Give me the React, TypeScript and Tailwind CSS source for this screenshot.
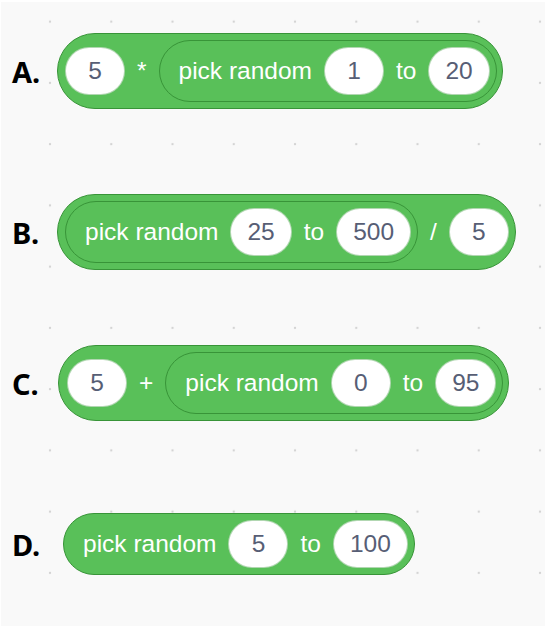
import React from "react"

const font = { fontFamily: '"Liberation Sans", Arial, sans-serif' }

function Input({ value }: { value: string }) {
	return (
		<div className="h-[48px] min-w-[60px] px-[16px] rounded-full bg-white border border-[#3f9c3f]/40 flex items-center justify-center text-[24.5px] text-[#575e75] leading-none shrink-0">
			{value}
		</div>
	)
}

function Word({ children }: { children: React.ReactNode }) {
	return <span className="text-[24.5px] text-white leading-none whitespace-nowrap">{children}</span>
}

function PickRandom({ from, to }: { from: string; to: string }) {
	return (
		<div className="h-[62px] rounded-full bg-[#59c059] border border-[#389438] flex items-center gap-[12px] pl-[19px] pr-[6px] shrink-0">
			<Word>pick random</Word>
			<Input value={from} />
			<Word>to</Word>
			<Input value={to} />
		</div>
	)
}

function Outer({ children, className }: { children: React.ReactNode; className?: string }) {
	return (
		<div
			className={
				"h-[76px] rounded-full bg-[#59c059] border border-[#389438] flex items-center gap-[12px] shrink-0 " +
				(className ?? "")
			}
		>
			{children}
		</div>
	)
}

function Row({ label, children, className }: { label: string; children: React.ReactNode; className?: string }) {
	return (
		<div className={"flex items-center " + (className ?? "")}>
			<div
				className="w-[56px] shrink-0 pl-[11px] text-[29px] font-bold text-black leading-none"
				style={{ fontFamily: '"Noto Sans", "Open Sans", sans-serif' }}
			>
				{label}
			</div>
			{children}
		</div>
	)
}

export default function App() {
	return (
		<div className="w-[546px] h-[627px] bg-white pt-[2px] px-px pb-px" style={font}>
			<div className="w-full h-full bg-[#f9f9f9] bg-[radial-gradient(circle,#d4d4d4_1px,transparent_1.6px)] bg-[length:61.25px_61.25px] bg-[position:18.4px_-11px] flex flex-col">
				<Row label="A." className="mt-[31px]">
					<Outer className="pl-[7px] pr-[5px]">
						<Input value="5" />
						<Word>*</Word>
						<PickRandom from="1" to="20" />
					</Outer>
				</Row>

				<Row label="B." className="mt-[85px]">
					<Outer className="pl-[7px] pr-[6px]">
						<PickRandom from="25" to="500" />
						<Word>/</Word>
						<Input value="5" />
					</Outer>
				</Row>

				<Row label="C." className="mt-[75px]">
					<Outer className="ml-px pl-[8px] pr-[5px]">
						<Input value="5" />
						<Word>+</Word>
						<PickRandom from="0" to="95" />
					</Outer>
				</Row>

				<Row label="D." className="mt-[92px]">
					<div className="ml-[6px]">
						<PickRandom from="5" to="100" />
					</div>
				</Row>
			</div>
		</div>
	)
}
